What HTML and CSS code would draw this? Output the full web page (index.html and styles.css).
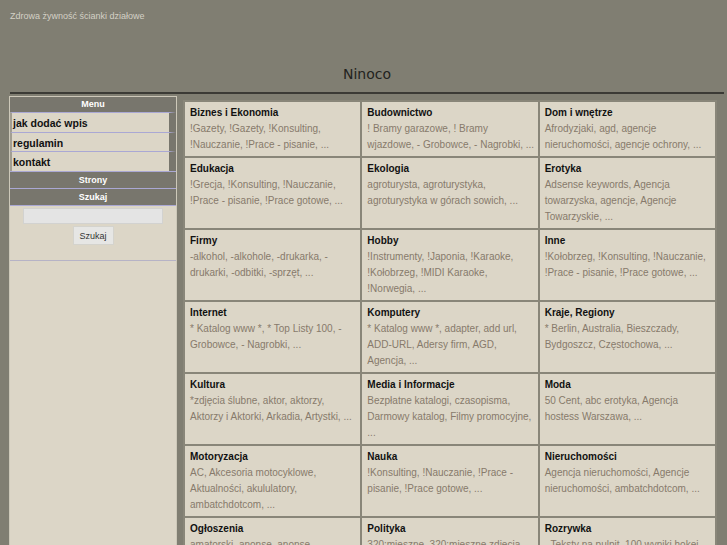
FILE: index.html
```html
<!DOCTYPE html>
<html lang="pl">
<head>
<meta charset="utf-8">
<title>Ninoco</title>
<link rel="stylesheet" href="styles.css">
</head>
<body>
<div class="page">
  <div class="topline"><a href="#">Zdrowa żywność</a> <a href="#">ścianki działowe</a></div>
  <h1 class="site-title">Ninoco</h1>
  <div class="rule"></div>
  <div class="main">
    <aside class="sidebar">
      <div class="side-head side-head-first">Menu</div>
      <ul class="menu">
        <li><a href="#">jak dodać wpis</a></li>
        <li><a href="#">regulamin</a></li>
        <li><a href="#">kontakt</a></li>
      </ul>
      <div class="side-head">Strony</div>
      <div class="side-head">Szukaj</div>
      <form class="search">
        <input class="search-input" type="text">
        <button class="search-btn" type="button">Szukaj</button>
      </form>
    </aside>
    <div class="cats">
      <div class="cat"><a class="cat-title" href="#">Biznes i Ekonomia</a><div class="cat-links"><a href="#">!Gazety</a>, <a href="#">!Gazety</a>, <a href="#">!Konsulting</a>, <a href="#">!Nauczanie</a>, <a href="#">!Prace - pisanie</a>, ...</div></div>
      <div class="cat"><a class="cat-title" href="#">Budownictwo</a><div class="cat-links"><a href="#">! Bramy garazowe</a>, <a href="#">! Bramy wjazdowe</a>, <a href="#">- Grobowce</a>, <a href="#">- Nagrobki</a>, ...</div></div>
      <div class="cat"><a class="cat-title" href="#">Dom i wnętrze</a><div class="cat-links"><a href="#">Afrodyzjaki</a>, <a href="#">agd</a>, <a href="#">agencje nieruchomości</a>, <a href="#">agencje ochrony</a>, ...</div></div>

      <div class="cat"><a class="cat-title" href="#">Edukacja</a><div class="cat-links"><a href="#">!Grecja</a>, <a href="#">!Konsulting</a>, <a href="#">!Nauczanie</a>, <a href="#">!Prace - pisanie</a>, <a href="#">!Prace gotowe</a>, ...</div></div>
      <div class="cat"><a class="cat-title" href="#">Ekologia</a><div class="cat-links"><a href="#">agroturysta</a>, <a href="#">agroturystyka</a>, <a href="#">agroturystyka w górach sowich</a>, ...</div></div>
      <div class="cat"><a class="cat-title" href="#">Erotyka</a><div class="cat-links"><a href="#">Adsense keywords</a>, <a href="#">Agencja towarzyska</a>, <a href="#">agencje</a>, <a href="#">Agencje Towarzyskie</a>, ...</div></div>

      <div class="cat"><a class="cat-title" href="#">Firmy</a><div class="cat-links"><a href="#">-alkohol</a>, <a href="#">-alkohole</a>, <a href="#">-drukarka</a>, <a href="#">-drukarki</a>, <a href="#">-odbitki</a>, <a href="#">-sprzęt</a>, ...</div></div>
      <div class="cat"><a class="cat-title" href="#">Hobby</a><div class="cat-links"><a href="#">!Instrumenty</a>, <a href="#">!Japonia</a>, <a href="#">!Karaoke</a>, <a href="#">!Kołobrzeg</a>, <a href="#">!MIDI Karaoke</a>, <a href="#">!Norwegia</a>, ...</div></div>
      <div class="cat"><a class="cat-title" href="#">Inne</a><div class="cat-links"><a href="#">!Kołobrzeg</a>, <a href="#">!Konsulting</a>, <a href="#">!Nauczanie</a>, <a href="#">!Prace - pisanie</a>, <a href="#">!Prace gotowe</a>, ...</div></div>

      <div class="cat"><a class="cat-title" href="#">Internet</a><div class="cat-links"><a href="#">* Katalog www *</a>, <a href="#">* Top Listy 100</a>, <a href="#">- Grobowce</a>, <a href="#">- Nagrobki</a>, ...</div></div>
      <div class="cat"><a class="cat-title" href="#">Komputery</a><div class="cat-links"><a href="#">* Katalog www *</a>, <a href="#">adapter</a>, <a href="#">add url</a>, <a href="#">ADD-URL</a>, <a href="#">Adersy firm</a>, <a href="#">AGD</a>, <a href="#">Agencja</a>, ...</div></div>
      <div class="cat"><a class="cat-title" href="#">Kraje, Regiony</a><div class="cat-links"><a href="#">* Berlin</a>, <a href="#">Australia</a>, <a href="#">Bieszczady</a>, <a href="#">Bydgoszcz</a>, <a href="#">Częstochowa</a>, ...</div></div>

      <div class="cat"><a class="cat-title" href="#">Kultura</a><div class="cat-links"><a href="#">*zdjęcia ślubne</a>, <a href="#">aktor</a>, <a href="#">aktorzy</a>, <a href="#">Aktorzy i Aktorki</a>, <a href="#">Arkadia</a>, <a href="#">Artystki</a>, ...</div></div>
      <div class="cat"><a class="cat-title" href="#">Media i Informacje</a><div class="cat-links"><a href="#">Bezpłatne katalogi</a>, <a href="#">czasopisma</a>, <a href="#">Darmowy katalog</a>, <a href="#">Filmy promocyjne</a>, ...</div></div>
      <div class="cat"><a class="cat-title" href="#">Moda</a><div class="cat-links"><a href="#">50 Cent</a>, <a href="#">abc erotyka</a>, <a href="#">Agencja hostess Warszawa</a>, ...</div></div>

      <div class="cat"><a class="cat-title" href="#">Motoryzacja</a><div class="cat-links"><a href="#">AC</a>, <a href="#">Akcesoria motocyklowe</a>, <a href="#">Aktualności</a>, <a href="#">akululatory</a>, <a href="#">ambatchdotcom</a>, ...</div></div>
      <div class="cat"><a class="cat-title" href="#">Nauka</a><div class="cat-links"><a href="#">!Konsulting</a>, <a href="#">!Nauczanie</a>, <a href="#">!Prace - pisanie</a>, <a href="#">!Prace gotowe</a>, ...</div></div>
      <div class="cat"><a class="cat-title" href="#">Nieruchomości</a><div class="cat-links"><a href="#">Agencja nieruchomości</a>, <a href="#">Agencje nieruchomości</a>, <a href="#">ambatchdotcom</a>, ...</div></div>

      <div class="cat"><a class="cat-title" href="#">Ogłoszenia</a><div class="cat-links"><a href="#">amatorski</a>, <a href="#">anonse</a>, <a href="#">anonse erotyczne</a>, ...</div></div>
      <div class="cat"><a class="cat-title" href="#">Polityka</a><div class="cat-links"><a href="#">320:mieszne</a>, <a href="#">320:mieszne zdjęcia</a>, ...</div></div>
      <div class="cat"><a class="cat-title" href="#">Rozrywka</a><div class="cat-links"><a href="#">- Teksty na pulpit</a>, <a href="#">100 wyniki hokej</a>, ...</div></div>
    </div>
  </div>
</div>
</body>
</html>
```

FILE: styles.css
```css
html, body {
  margin: 0;
  padding: 0;
  background: #807e72;
}

body {
  font-family: "Liberation Sans", Arial, sans-serif;
  color: #111;
}

a {
  text-decoration: none;
}

.page {
  padding: 0 3px 0 9px;
}

.topline {
  padding: 11px 0 0 1px;
  font-size: 9px;
  line-height: 11px;
  color: #d4d1c6;
}

.topline a {
  color: #d4d1c6;
}

.site-title {
  margin: 44px 0 9px;
  font-family: "DejaVu Sans", Verdana, sans-serif;
  font-size: 14px;
  line-height: 17px;
  font-weight: normal;
  color: #232320;
  text-align: center;
  padding-left: 1px;
}

.rule {
  height: 2px;
  margin: 0 0 2px 1px;
  background: #3b3a35;
}

.main {
  display: flex;
  align-items: stretch;
  gap: 6px;
}

/* Sidebar */
.sidebar {
  width: 168px;
  box-sizing: border-box;
  flex: none;
  background: #dcd6c7;
  border: 1px solid #cdc8b9;
  border-bottom: 0;
}

.side-head {
  height: 16px;
  line-height: 16px;
  background: #78766d;
  color: #fff;
  font-size: 9px;
  font-weight: bold;
  text-align: center;
  border-top: 1px solid #aaa8d4;
}

.side-head-first {
  height: 15px;
  line-height: 15px;
  border-top: 0;
}

.menu {
  list-style: none;
  margin: 0;
  padding: 0;
}

.menu li {
  border-top: 1px solid #aaa8d4;
  border-left: 2px solid #a29e91;
  border-right: 7px solid #78766d;
  height: 18.7px;
  line-height: 18.7px;
  padding-left: 1px;
}

.menu a {
  color: #111;
  font-size: 10.5px;
  font-weight: bold;
}

.search {
  margin: 0;
  padding: 2px 0 15px;
  border-top: 1px solid #aaa8d4;
  border-bottom: 1px solid #b6b3c6;
  display: flex;
  flex-direction: column;
  align-items: center;
}

.search-input {
  box-sizing: border-box;
  width: 140px;
  height: 16px;
  margin: 0;
  padding: 0 2px;
  background: #e4e4e4;
  border: 1px solid #d2d2d0;
  outline: none;
}

.search-btn {
  box-sizing: border-box;
  width: 41px;
  height: 19px;
  margin: 2px 0 0;
  padding: 0;
  font-family: "Liberation Sans", Arial, sans-serif;
  font-size: 9px;
  color: #333;
  background: #e6e6e4;
  border: 1px solid #d4d3cd;
}

/* Category grid */
.cats {
  width: 534px;
  box-sizing: border-box;
  flex: none;
  align-self: flex-start;
  margin-top: 4px;
  padding: 2px;
  background: #898679;
  display: grid;
  grid-template-columns: repeat(3, 1fr);
  gap: 2px;
}

.cat {
  background: #dcd6c7;
  padding: 3px 2px 3px 5px;
  font-size: 10px;
  line-height: 16px;
  color: #877a6b;
}

.cat-title {
  display: block;
  color: #111;
  font-weight: bold;
}

.cat-links a {
  color: #877a6b;
}
```
